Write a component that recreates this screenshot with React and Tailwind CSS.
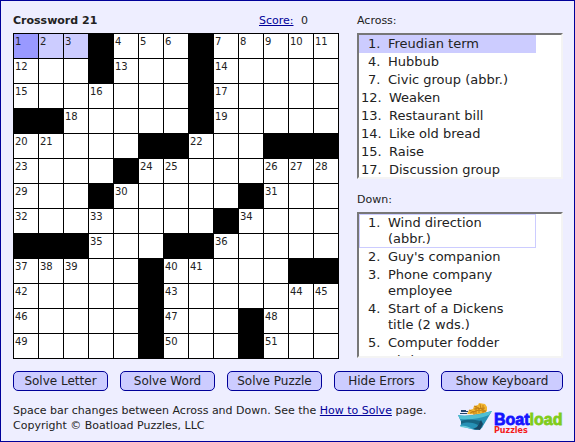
import React from "react";

const ROWS = [
  "1 2 3 # 4 5 6 # 7 8 9 10 11",
  "12 . . # 13 . . # 14 . . . .",
  "15 . . 16 . . . # 17 . . . .",
  "# # 18 . . . . # 19 . . . .",
  "20 21 . . . # # 22 . . # # #",
  "23 . . . # 24 25 . . . 26 27 28",
  "29 . . # 30 . . . . # 31 . .",
  "32 . . 33 . . . . # 34 . . .",
  "# # # 35 . . # # 36 . . . .",
  "37 38 39 . . # 40 41 . . . # #",
  "42 . . . . # 43 . . . . 44 45",
  "46 . . . . # 47 . . # 48 . .",
  "49 . . . . # 50 . . # 51 . .",
].map((row) => row.split(" "));

const ACROSS = [
  [1, "Freudian term"],
  [4, "Hubbub"],
  [7, "Civic group (abbr.)"],
  [12, "Weaken"],
  [13, "Restaurant bill"],
  [14, "Like old bread"],
  [15, "Raise"],
  [17, "Discussion group"],
];

const DOWN = [
  [1, "Wind direction (abbr.)"],
  [2, "Guy's companion"],
  [3, "Phone company employee"],
  [4, "Start of a Dickens title (2 wds.)"],
  [5, "Computer fodder"],
  [6, "Bird"],
];

function cellColor(value, row, col) {
  if (value === "#") return "bg-black";
  if (row === 0 && col === 0) return "bg-[#9999ff]";
  if (row === 0 && col < 3) return "bg-[#ccccff]";
  return "bg-white";
}

function Board() {
  return (
    <div className="grid w-fit grid-cols-[repeat(13,24px)] gap-px bg-black p-px">
      {ROWS.map((row, r) =>
        row.map((value, c) => (
          <div
            key={`${r}-${c}`}
            className={`h-6 px-px pt-0.5 text-[10px] leading-3 ${cellColor(value, r, c)}`}
          >
            {value === "#" || value === "." ? "" : value}
          </div>
        ))
      )}
    </div>
  );
}

function Clues({ title, clues, firstStyle }) {
  return (
    <section>
      <h2 className="h-[19px] text-[11px] leading-[13px]">{title}</h2>
      <ol className="h-[146px] overflow-y-auto border-2 border-t-[#777777] border-r-[#f4f4f4] border-b-[#f4f4f4] border-l-[#777777] bg-white pr-[25px] text-[13px] leading-4 [scrollbar-width:none]">
        {clues.map(([number, text], i) => (
          <li
            key={number}
            className={`flex border ${i === 0 ? firstStyle : "border-transparent"}`}
          >
            <span className={`shrink-0 ${number > 9 ? "w-[29px] pl-px" : "w-7 pl-2"}`}>
              {number}.
            </span>
            <span className="pr-6">{text}</span>
          </li>
        ))}
      </ol>
    </section>
  );
}

function Logo() {
  return (
    <svg
      className="h-8 w-[106px] shrink-0"
      viewBox="0 0 106 32"
      role="img"
      aria-label="Boatload Puzzles"
    >
      <path d="M10 11 12 7 16 6 17 3 21 2 22 0 28 1 30 4 30 8 25 12Z" fill="#f2b632" />
      <path
        d="M12 7l5 2v3M17 3l5 2v5M23 1l1 5 5 2M13 10l9-3 7 2M17 6l11-1M19 3v8M26 2v9"
        stroke="#b9750f"
        fill="none"
        strokeWidth="0.8"
      />
      <path d="M4 7h5v1h2v1H4zM3 10h7v1H3z" fill="#24456e" />
      <path d="M1 12c8 2 23-1 34-4L26 23c-1 3-4 4-8 4L3 23c3-3 0-6-2-11Z" fill="#2791b5" />
      <path d="M1 12c11 2 22-1 34-4l-3 4c-10 4-19 5-29 4Z" fill="#50bfd2" />
      <path d="M4 18c7-2 13-1 20 0l-3 4c-7-3-11-3-17-1Z" fill="#176582" />
      <path d="M24 17l2 4-3 6-7-1 4-2Z" fill="#174664" />
      <path d="M3 23c6-1 8 1 13 3L4 24Z" fill="#68cad8" />
      <text
        x="37"
        y="22"
        fontSize="16"
        fontWeight="700"
        strokeWidth="0.8"
        fontFamily="'Liberation Sans', Arial, sans-serif"
      >
        <tspan fill="#1414ff" stroke="#1414ff">Boat</tspan>
        <tspan fill="#80cc1a" stroke="#80cc1a">load</tspan>
      </text>
      <text
        x="37"
        y="30"
        fontSize="8"
        fontWeight="700"
        fill="#f41c1c"
        fontFamily="'DejaVu Sans', Verdana, sans-serif"
      >
        Puzzles
      </text>
    </svg>
  );
}

const BUTTONS = ["Solve Letter", "Solve Word", "Solve Puzzle", "Hide Errors"];
const BUTTON_STYLE =
  "h-5 rounded-[5px] border border-[#000099] bg-[#ccccff] text-[12px] leading-4 whitespace-nowrap";

export default function App() {
  return (
    <main className="border border-[#000099] bg-[#eeeeff] pt-[13px] pr-[11px] pb-1.5 pl-3 font-['DejaVu_Sans',Verdana,sans-serif] text-[#222222]">
      <div className="flex gap-[18px]">
        <div className="shrink-0">
          <header className="flex h-[19px] justify-between pr-[31px] text-[11px] leading-[13px]">
            <h1 className="font-bold">Crossword 21</h1>
            <p>
              <a href="#score" className="mr-1 text-[#000099] underline">
                Score:
              </a>{" "}
              0
            </p>
          </header>
          <Board />
        </div>
        <div className="flex flex-1 flex-col gap-3.5">
          <Clues title="Across:" clues={ACROSS} firstStyle="border-[#ccccff] bg-[#ccccff]" />
          <Clues title="Down:" clues={DOWN} firstStyle="border-[#ccccff]" />
        </div>
      </div>
      <div className="mt-3 flex justify-between">
        {BUTTONS.map((label) => (
          <button key={label} type="button" className={`${BUTTON_STYLE} w-[95px]`}>
            {label}
          </button>
        ))}
        <button type="button" className={`${BUTTON_STYLE} w-[122px]`}>
          Show Keyboard
        </button>
      </div>
      <footer className="mt-3 flex items-start justify-between">
        <p className="text-[11px] leading-[15px]">
          Space bar changes between Across and Down. See the{" "}
          <a href="#how-to-solve" className="text-[#000099] underline">
            How to Solve
          </a>{" "}
          page.
          <br />
          Copyright © Boatload Puzzles, LLC
        </p>
        <Logo />
      </footer>
    </main>
  );
}
